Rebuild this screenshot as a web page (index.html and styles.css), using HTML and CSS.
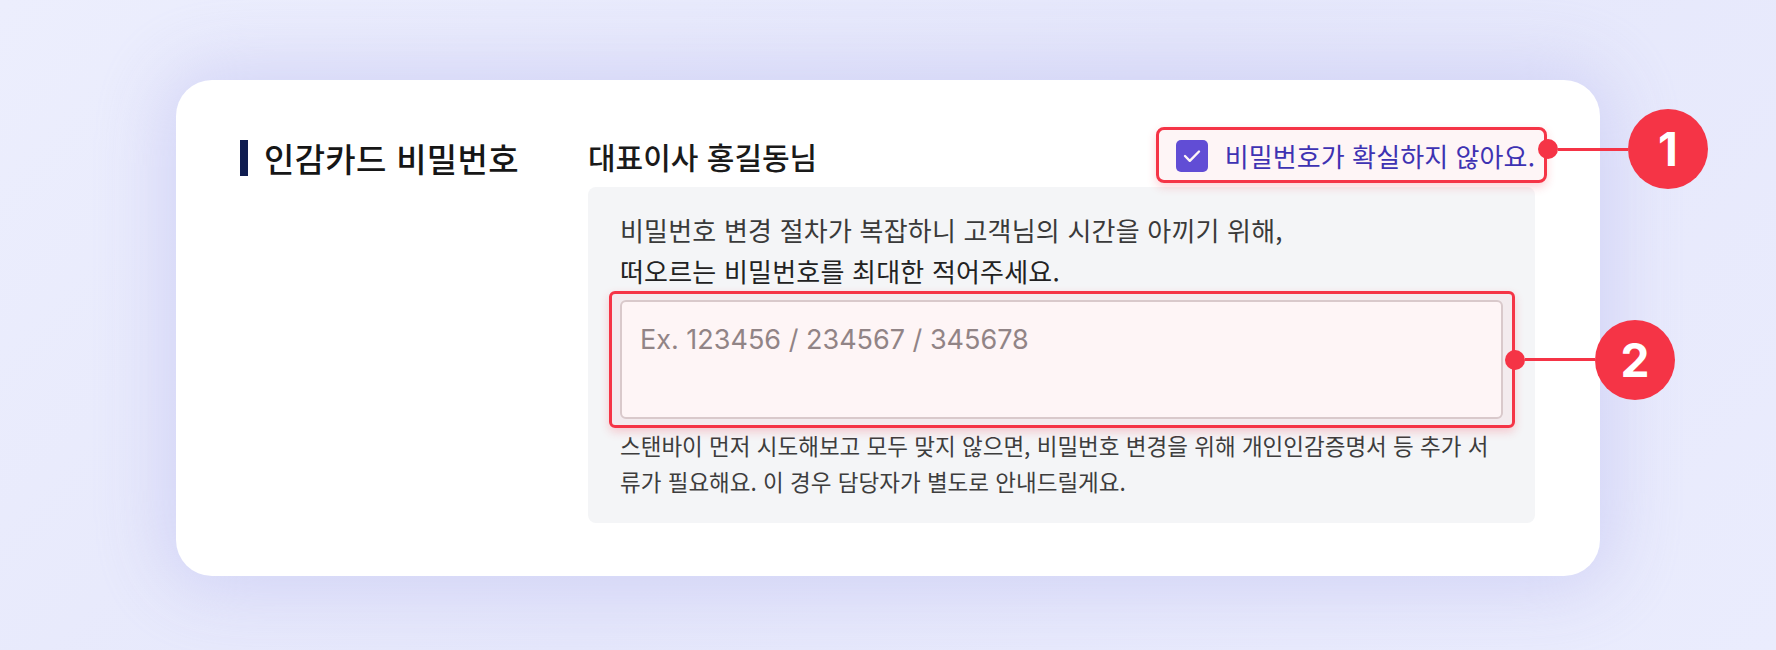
FILE: index.html
```html
<!DOCTYPE html>
<html lang="ko">
<head>
<meta charset="utf-8">
<title>인감카드 비밀번호</title>
<link rel="stylesheet" href="styles.css">
</head>
<body>
  <section class="card">
    <div class="side">
      <span class="side-bar"></span>
      <h2 class="side-title">인감카드 비밀번호</h2>
    </div>
    <div class="main">
      <div class="head">
        <h3 class="owner">대표이사 홍길동님</h3>
        <div class="annot annot-one">
          <label class="check">
            <span class="check-box">
              <svg width="32" height="32" viewBox="0 0 32 32"><polyline points="9,16 13.8,20.8 23,11.5" fill="none" stroke="#fff" stroke-width="2.4" stroke-linecap="round" stroke-linejoin="round"/></svg>
            </span>
            <span class="check-text">비밀번호가 확실하지 않아요.</span>
          </label>
          <span class="hl hl-one">
            <span class="callout callout-one"><span class="dot"></span><span class="line"></span><span class="num">1</span></span>
          </span>
        </div>
      </div>
      <div class="panel">
        <p class="lead">비밀번호 변경 절차가 복잡하니 고객님의 시간을 아끼기 위해,<br><span class="lead-strong">떠오르는 비밀번호를 최대한 적어주세요.</span></p>
        <div class="annot annot-two">
          <textarea class="field" placeholder="Ex. 123456 / 234567 / 345678"></textarea>
          <span class="hl hl-two">
            <span class="callout callout-two"><span class="dot"></span><span class="line"></span><span class="num">2</span></span>
          </span>
        </div>
        <p class="help">스탠바이 먼저 시도해보고 모두 맞지 않으면, 비밀번호 변경을 위해 개인인감증명서 등 추가 서류가 필요해요. 이 경우 담당자가 별도로 안내드릴게요.</p>
      </div>
    </div>
  </section>
</body>
</html>
```
FILE: styles.css
```css
* { box-sizing: border-box; }

html, body {
  margin: 0;
  height: 100%;
}

body {
  background: linear-gradient(135deg, #eceefd 0%, #e5e7fb 50%, #eaecfd 100%);
  font-family: "Noto Sans CJK KR", "Noto Sans", sans-serif;
  padding: 80px 176px 0 176px;
  overflow: hidden;
}

.card {
  width: 1424px;
  background: #ffffff;
  border-radius: 36px;
  box-shadow: 0 0 70px 12px rgba(196, 198, 242, 0.65);
  display: grid;
  grid-template-columns: 348px 1fr;
  padding: 56px 65px 53px 64px;
}

.side {
  display: flex;
  align-items: center;
  gap: 16px;
  height: 40px;
  margin-top: 2px;
}

.side-bar {
  width: 8px;
  height: 36px;
  background: #0f1c50;
}

.side-title {
  margin: 0;
  font-size: 33px;
  font-weight: 500;
  letter-spacing: 0.3px;
  color: #161616;
  line-height: 40px;
}

.main {
  display: flex;
  flex-direction: column;
}

.head {
  display: flex;
  align-items: center;
  justify-content: space-between;
  height: 40px;
  margin-bottom: 11px;
}

.owner {
  margin: 0;
  font-size: 30px;
  font-weight: 500;
  color: #1a1a1a;
  line-height: 40px;
}

.annot {
  position: relative;
}

.check {
  display: flex;
  align-items: center;
  gap: 17px;
  height: 32px;
}

.check-box {
  width: 32px;
  height: 32px;
  border-radius: 5px;
  background: #5a4fdd;
  display: flex;
}

.check-text {
  font-size: 26px;
  letter-spacing: 0.1px;
  color: #3532b8;
  line-height: 32px;
}

.hl {
  position: absolute;
  border: 3px solid #f53446;
  border-radius: 8px;
  background: rgba(245, 52, 70, 0.05);
  box-shadow: 0 4px 10px rgba(245, 52, 70, 0.22);
  pointer-events: none;
}

.hl-one {
  top: -13px;
  bottom: -11px;
  left: -20px;
  right: -12px;
}

.hl-two {
  top: -9px;
  bottom: -9px;
  left: -11px;
  right: -12px;
  border-radius: 6px;
}

.callout {
  position: absolute;
  display: flex;
  align-items: center;
  height: 80px;
}

.callout-one {
  left: calc(100% - 6px);
  top: -21px;
}

.callout-two {
  left: calc(100% - 7px);
  top: calc(50% - 40px);
}

.dot {
  width: 20px;
  height: 20px;
  border-radius: 50%;
  background: #f53446;
}

.line {
  width: 70px;
  height: 3px;
  background: #f53446;
}

.num {
  width: 80px;
  height: 80px;
  border-radius: 50%;
  background: #f53446;
  color: #ffffff;
  font-family: Inter, "Liberation Sans", sans-serif;
  font-weight: 700;
  font-size: 46px;
  display: flex;
  align-items: center;
  justify-content: center;
}

.panel {
  background: #f4f5f7;
  border-radius: 8px;
  padding: 22px 32px 24px 32px;
}

.lead {
  margin: 0 0 9px 0;
  font-size: 26px;
  letter-spacing: 0.2px;
  line-height: 41px;
  color: #3a3a3a;
}

.lead-strong {
  color: #222222;
}

.field {
  display: block;
  width: 100%;
  height: 119px;
  border: 2px solid #d8d1d2;
  border-radius: 6px;
  background: #ffffff;
  padding: 20px 18px;
  font-family: Inter, "Noto Sans CJK KR", sans-serif;
  font-size: 27px;
  line-height: 36px;
  color: #333;
  resize: none;
  outline: none;
}

.field::placeholder {
  color: #8d8889;
}

.help {
  margin: 8px 0 0 0;
  font-size: 22.5px;
  line-height: 36px;
  color: #3d3d3d;
  word-break: break-all;
}
```
